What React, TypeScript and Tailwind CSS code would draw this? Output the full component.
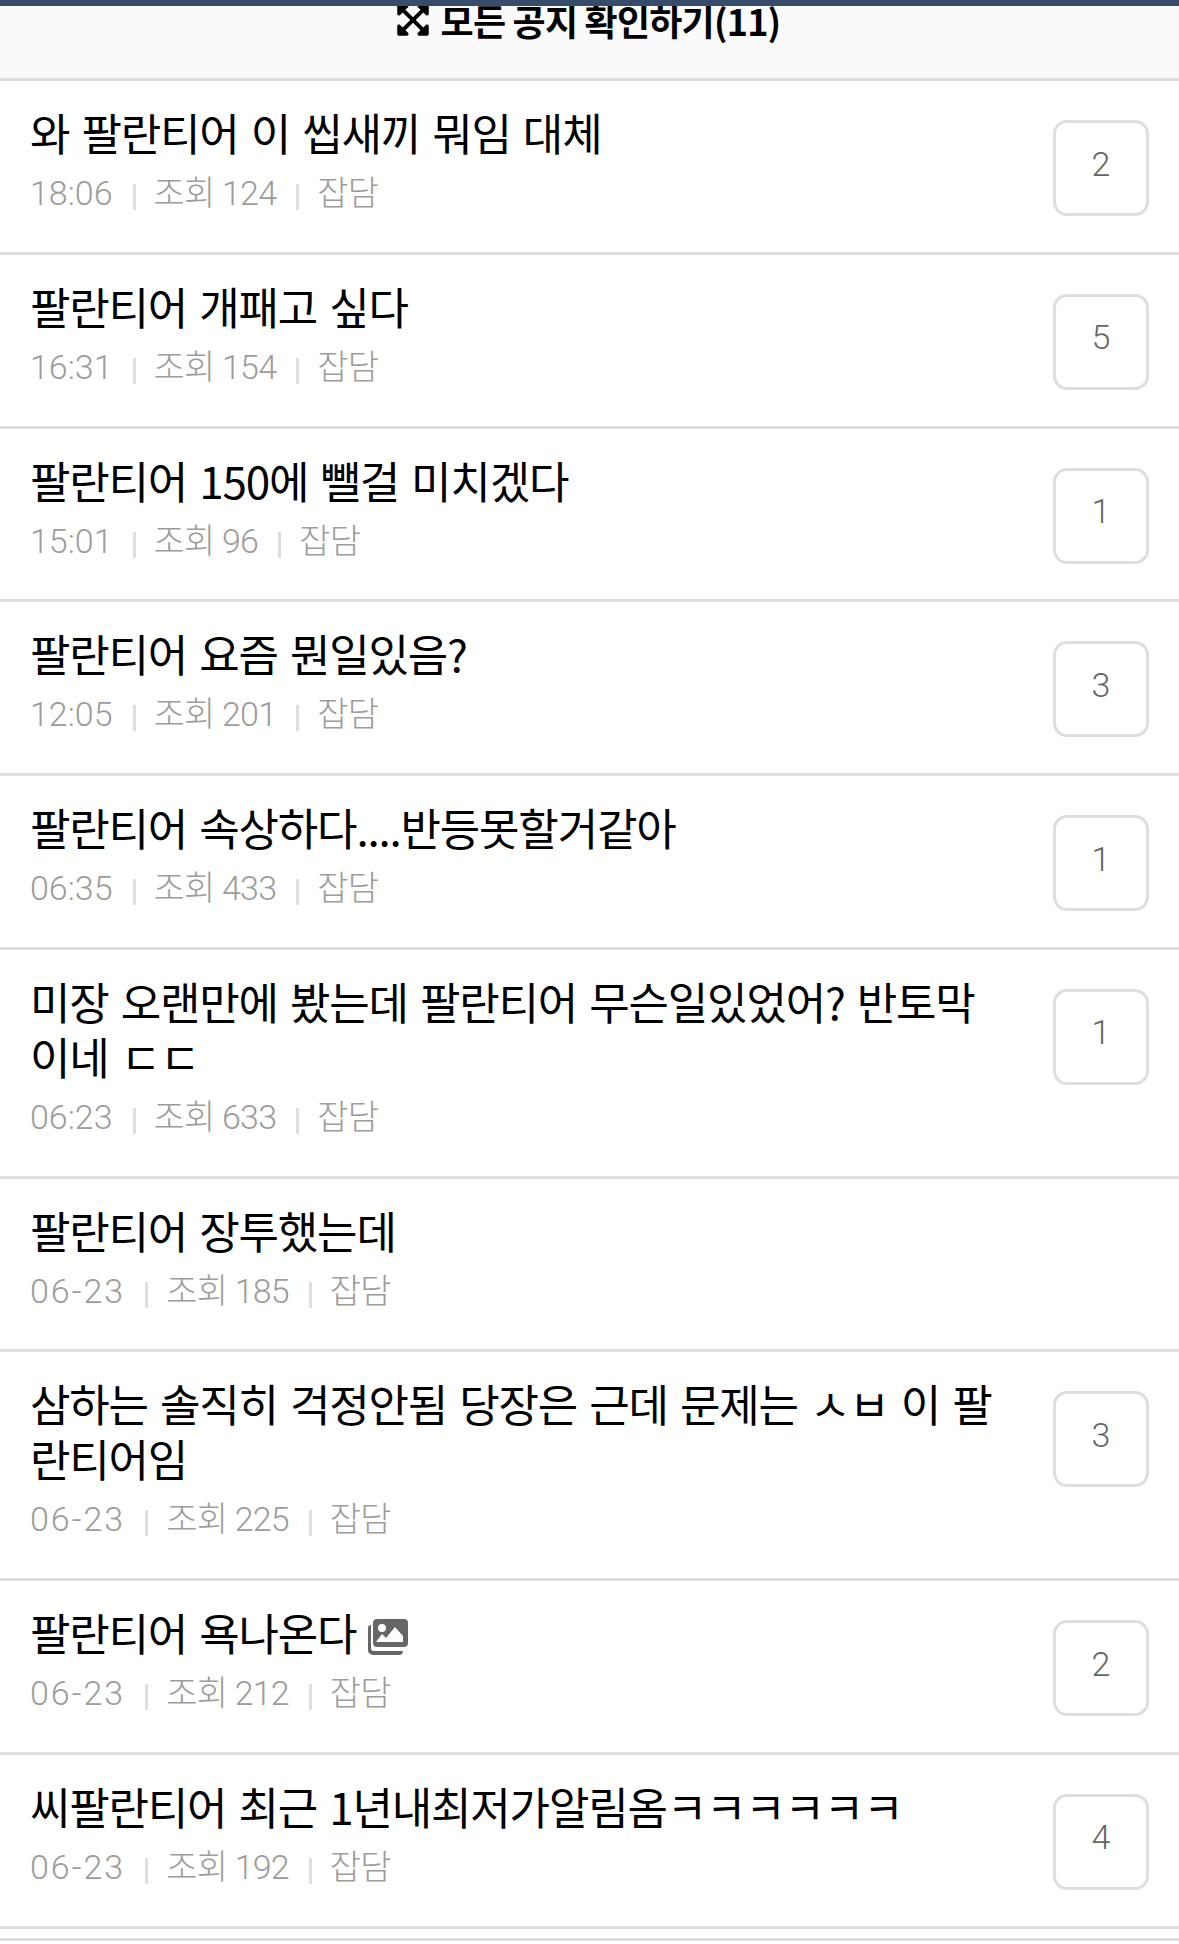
import { FaExpandArrowsAlt } from 'react-icons/fa'

const posts = [
  { title: '와 팔란티어 이 씹새끼 뭐임 대체', time: '18:06', views: 124, count: 2 },
  { title: '팔란티어 개패고 싶다', time: '16:31', views: 154, count: 5 },
  { title: '팔란티어 150에 뺄걸 미치겠다', time: '15:01', views: 96, count: 1 },
  { title: '팔란티어 요즘 뭔일있음?', time: '12:05', views: 201, count: 3 },
  { title: '팔란티어 속상하다....반등못할거같아', time: '06:35', views: 433, count: 1 },
  { title: '미장 오랜만에 봤는데 팔란티어 무슨일있었어? 반토막이네 ㄷㄷ', time: '06:23', views: 633, count: 1 },
  { title: '팔란티어 장투했는데', time: '06-23', views: 185 },
  { title: '삼하는 솔직히 걱정안됨 당장은 근데 문제는 ㅅㅂ 이 팔란티어임', time: '06-23', views: 225, count: 3 },
  { title: '팔란티어 욕나온다', time: '06-23', views: 212, count: 2, image: true },
  { title: '씨팔란티어 최근 1년내최저가알림옴ㅋㅋㅋㅋㅋㅋ', time: '06-23', views: 192, count: 4 },
]

function ImageIcon() {
  return (
    <svg viewBox="0 0 40 36" className="ml-[12px] inline-block h-[36px] w-[40px] align-[-4px]">
      <path d="M0 9a3 3 0 0 1 3-3v23a3 3 0 0 0 3 3h29a4 4 0 0 1-4 4H5a5 5 0 0 1-5-5z" fill="#666" />
      <path
        fillRule="evenodd"
        fill="#666"
        d="M9 0h27a4 4 0 0 1 4 4v20a4 4 0 0 1-4 4H9a4 4 0 0 1-4-4V4a4 4 0 0 1 4-4zm5 5a4 4 0 1 0 0 8 4 4 0 0 0 0-8zm13 3l-9 11-4-4-6 8h27v-6z"
      />
    </svg>
  )
}

function Sep() {
  return <span className="ml-[20px] mr-[18px] inline-block h-[26px] w-[3px] bg-[#dedede] align-[-5px]"></span>
}

export default function App() {
  return (
    <div className="min-h-[1944px] bg-white font-['Noto_Sans_CJK_KR',sans-serif]">
      <div className="relative z-10 h-[6px] bg-[#374b6b]"></div>
      <div className="flex h-[72px] justify-center overflow-hidden bg-[#fafafa] pr-[4px]">
        <div className="-mt-[13px] flex h-[54px] items-center gap-[10px] text-[36px] font-bold tracking-[-0.8px] text-black">
          <FaExpandArrowsAlt className="text-[36px]" />
          모든 공지 확인하기(11)
        </div>
      </div>
      <ul>
        {posts.map((post) => (
          <li key={post.title + post.time} className="flex items-start justify-between border-t-[3px] border-[#dedede] pb-[35.75px] pl-[30px] pr-[30px] pt-[24px]">
            <div className="w-[980px]">
              <p className="break-all text-[44px] leading-[55px] font-normal tracking-[-1.2px] text-black [word-spacing:3.5px]">
                {post.title}
                {post.image && <ImageIcon />}
              </p>
              <p className="mt-[10px] h-[46px] font-['Roboto','Noto_Sans_CJK_KR',sans-serif] text-[34px] leading-[46px] font-light tracking-[-0.8px] text-[#9c9c9c]">
                <span className={post.time.includes('-') ? 'tracking-[2px]' : 'tracking-[0px]'}>{post.time}</span>
                <Sep />
                조회 {post.views}
                <Sep />
                잡담
              </p>
            </div>
            {post.count && (
              <div className="mt-[15px] flex h-[96px] w-[96px] items-center justify-center rounded-[14px] border-[3px] border-[#dedede] pb-[8px] font-['Roboto',sans-serif] text-[34px] font-light text-[#666]">
                {post.count}
              </div>
            )}
          </li>
        ))}
      </ul>
      <div className="h-[15px] border-y-[3px] border-[#dedede]"></div>
    </div>
  )
}
